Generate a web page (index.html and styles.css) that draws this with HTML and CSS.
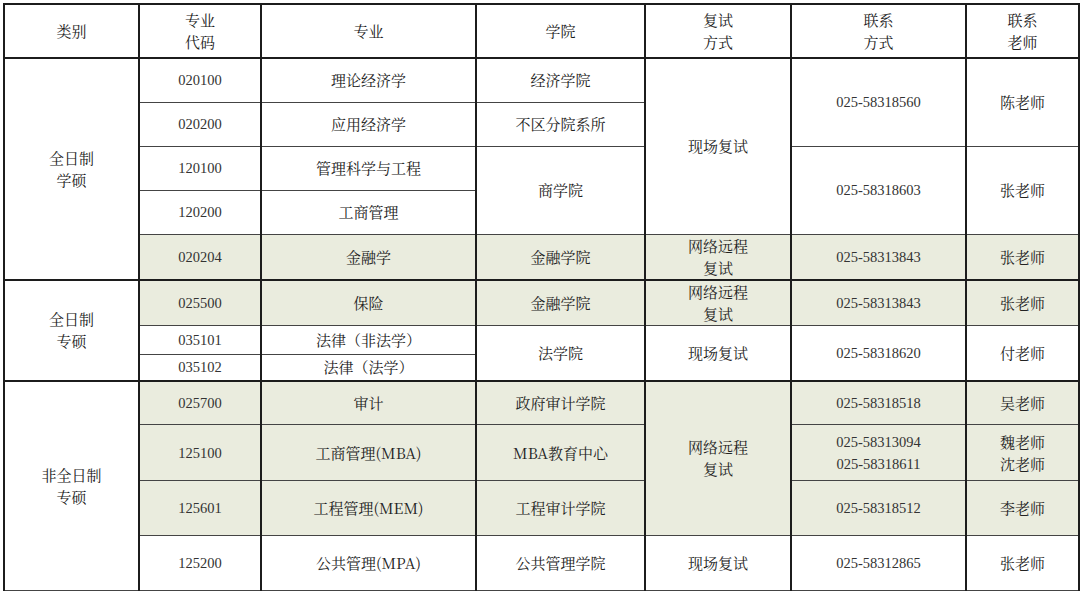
FILE: index.html
```html
<!DOCTYPE html>
<html lang="zh-CN">
<head>
<meta charset="utf-8">
<title>复试联系方式</title>
<link rel="stylesheet" href="styles.css">
</head>
<body>
<table class="grid">
  <colgroup>
    <col class="c1"><col class="c2"><col class="c3"><col class="c4"><col class="c5"><col class="c6"><col class="c7">
  </colgroup>
  <thead>
    <tr class="h-head">
      <th>类别</th>
      <th>专业<br>代码</th>
      <th>专业</th>
      <th>学院</th>
      <th>复试<br>方式</th>
      <th>联系<br>方式</th>
      <th>联系<br>老师</th>
    </tr>
  </thead>
  <tbody>
    <tr class="h44">
      <td rowspan="5" class="cat">全日制<br>学硕</td>
      <td class="num">020100</td>
      <td>理论经济学</td>
      <td>经济学院</td>
      <td rowspan="4">现场复试</td>
      <td rowspan="2" class="num">025-58318560</td>
      <td rowspan="2">陈老师</td>
    </tr>
    <tr class="h44">
      <td class="num">020200</td>
      <td>应用经济学</td>
      <td>不区分院系所</td>
    </tr>
    <tr class="h44">
      <td class="num">120100</td>
      <td>管理科学与工程</td>
      <td rowspan="2">商学院</td>
      <td rowspan="2" class="num">025-58318603</td>
      <td rowspan="2">张老师</td>
    </tr>
    <tr class="h44">
      <td class="num">120200</td>
      <td>工商管理</td>
    </tr>
    <tr class="h44 green">
      <td class="num">020204</td>
      <td>金融学</td>
      <td>金融学院</td>
      <td class="two">网络远程<br>复试</td>
      <td class="num">025-58313843</td>
      <td>张老师</td>
    </tr>
    <tr class="h46 group">
      <td rowspan="3" class="cat white">全日制<br>专硕</td>
      <td class="num g">025500</td>
      <td class="g">保险</td>
      <td class="g">金融学院</td>
      <td class="two g">网络远程<br>复试</td>
      <td class="num g">025-58313843</td>
      <td class="g">张老师</td>
    </tr>
    <tr class="h29">
      <td class="num">035101</td>
      <td>法律（非法学）</td>
      <td rowspan="2">法学院</td>
      <td rowspan="2">现场复试</td>
      <td rowspan="2" class="num">025-58318620</td>
      <td rowspan="2">付老师</td>
    </tr>
    <tr class="h26">
      <td class="num">035102</td>
      <td>法律（法学）</td>
    </tr>
    <tr class="h44 group">
      <td rowspan="4" class="cat white">非全日制<br>专硕</td>
      <td class="num g">025700</td>
      <td class="g">审计</td>
      <td class="g">政府审计学院</td>
      <td rowspan="3" class="two g">网络远程<br>复试</td>
      <td class="num g">025-58318518</td>
      <td class="g">吴老师</td>
    </tr>
    <tr class="h56 green">
      <td class="num">125100</td>
      <td>工商管理(MBA)</td>
      <td>MBA教育中心</td>
      <td class="num two">025-58313094<br>025-58318611</td>
      <td class="two">魏老师<br>沈老师</td>
    </tr>
    <tr class="h55 green">
      <td class="num">125601</td>
      <td>工程管理(MEM)</td>
      <td>工程审计学院</td>
      <td class="num">025-58318512</td>
      <td>李老师</td>
    </tr>
    <tr class="h55">
      <td class="num">125200</td>
      <td>公共管理(MPA)</td>
      <td>公共管理学院</td>
      <td>现场复试</td>
      <td class="num">025-58312865</td>
      <td>张老师</td>
    </tr>
  </tbody>
</table>
</body>
</html>
```

FILE: styles.css
```css
html, body {
  margin: 0;
  padding: 0;
  background: #ffffff;
}

body {
  padding: 3px 2px 0 3px;
  font-family: "Noto Serif CJK SC", "Liberation Serif", "Noto Sans CJK SC", serif;
  color: #222222;
}

.grid {
  border-collapse: collapse;
  table-layout: fixed;
  width: 1075px;
  font-size: 15px;
}

.c1 { width: 135px; }
.c2 { width: 122px; }
.c3 { width: 215px; }
.c4 { width: 169px; }
.c5 { width: 146px; }
.c6 { width: 175px; }
.c7 { width: 113px; }

.grid th,
.grid td {
  padding: 0;
  text-align: center;
  vertical-align: middle;
  line-height: 22px;
  border-left: 2px solid #1c1c1c;
  border-right: 2px solid #1c1c1c;
  border-top: 1px solid #444444;
  border-bottom: 1px solid #444444;
  font-weight: normal;
  overflow: hidden;
  white-space: nowrap;
}

.grid th {
  border-top: 2px solid #1c1c1c;
  border-bottom: 2px solid #1c1c1c;
  color: #1a1a1a;
}

.num {
  font-family: "Liberation Serif", serif;
  font-size: 14.5px;
  color: #333333;
}

.two { line-height: 21px; }

.h-head { height: 54px; }
.h44 { height: 44px; }
.h46 { height: 46px; }
.h29 { height: 29px; }
.h26 { height: 26px; }
.h56 { height: 56px; }
.h55 { height: 55px; }

.green td,
.grid td.g {
  background: #eaecde;
}

.grid td.white {
  background: #ffffff;
}

.group td {
  border-top: 2px solid #1c1c1c;
}

.cat {
  line-height: 23px;
}
```
